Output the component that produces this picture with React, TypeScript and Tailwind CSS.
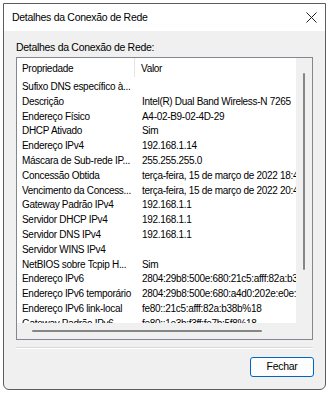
const rows: [string, string][] = [
  ["Sufixo DNS específico à...", ""],
  ["Descrição", "Intel(R) Dual Band Wireless-N 7265"],
  ["Endereço Físico", "A4-02-B9-02-4D-29"],
  ["DHCP Ativado", "Sim"],
  ["Endereço IPv4", "192.168.1.14"],
  ["Máscara de Sub-rede IP...", "255.255.255.0"],
  ["Concessão Obtida", "terça-feira, 15 de março de 2022 18:40:12"],
  ["Vencimento da Concess...", "terça-feira, 15 de março de 2022 20:40:12"],
  ["Gateway Padrão IPv4", "192.168.1.1"],
  ["Servidor DHCP IPv4", "192.168.1.1"],
  ["Servidor DNS IPv4", "192.168.1.1"],
  ["Servidor WINS IPv4", ""],
  ["NetBIOS sobre Tcpip H...", "Sim"],
  ["Endereço IPv6", "2804:29b8:500e:680:21c5:afff:82a:b38b"],
  ["Endereço IPv6 temporário", "2804:29b8:500e:680:a4d0:202e:e0e:1c2"],
  ["Endereço IPv6 link-local", "fe80::21c5:afff:82a:b38b%18"],
  ["Gateway Padrão IPv6", "fe80::1e3b:f3ff:fe7b:5f8%18"],
]

export default function App() {
  return (
    <div
      className="w-[333px] h-[394px] bg-white pt-[3px] pl-[3px] text-[10px] tracking-[-0.3px] text-black"
      style={{ fontFamily: '"Liberation Sans", Arial, sans-serif' }}
    >
      <div className="w-[323px] h-[387px] border border-[#5c5c5c] rounded-b-[6px] flex flex-col overflow-hidden bg-[#f0f0f0]">
        {/* title bar */}
        <div className="h-[27px] bg-white flex items-center justify-between pl-[8px] pr-[6px] shrink-0">
          <span className="text-[10.5px] pt-[1px]">Detalhes da Conexão de Rede</span>
          <svg width="11" height="11" viewBox="0 0 11 11" className="mr-[2px]">
            <path d="M0.5 0.5 L10.5 10.5 M10.5 0.5 L0.5 10.5" stroke="#222" strokeWidth="1" />
          </svg>
        </div>

        <div className="flex-1 flex flex-col px-[12px]">
          <div className="pt-[9px] h-[26px] text-[10.5px]">Detalhes da Conexão de Rede:</div>

          {/* list box */}
          <div className="h-[283px] border border-[#828790] bg-white flex flex-col shrink-0">
            <div className="flex flex-1 min-h-0">
              <div className="flex-1 min-w-0 flex flex-col overflow-hidden">
                <div className="h-[22px] flex shrink-0">
                  <div className="w-[118px] pl-[5px] pt-[3px] border-r border-[#e5e5e5] h-[19px]">Propriedade</div>
                  <div className="pl-[6px] pt-[3px]">Valor</div>
                </div>
                {rows.map(([k, v], i) => (
                  <div key={i} className="flex h-[14.8px] leading-[14.8px] whitespace-nowrap shrink-0">
                    <div className="w-[119px] pl-[5px] pr-[2px] overflow-hidden truncate">{k}</div>
                    <div className="pl-[6px] overflow-hidden flex-1">{v}</div>
                  </div>
                ))}
              </div>
              {/* vertical scrollbar */}
              <div className="w-[16px] bg-[#f0f0f0] flex justify-center pt-[15px]">
                <div className="w-[2px] h-[197px] bg-[#868686] rounded-full" />
              </div>
            </div>
            {/* horizontal scrollbar */}
            <div className="h-[16px] flex shrink-0">
              <div className="flex-1 bg-[#f0f0f0] flex items-center pl-[15px]">
                <div className="h-[2px] w-[230px] bg-[#868686] rounded-full" />
              </div>
              <div className="w-[16px] bg-[#f0f0f0]" />
            </div>
          </div>

          <div className="mt-[7px] h-[2px] border-t border-[#d9d9d9] border-b border-b-white" />

          <div className="flex justify-end mt-[8px]">
            <button className="w-[64px] h-[20px] rounded-[3px] border border-[#0067c0] bg-[#fdfdfd] text-[10.5px] -mr-[1px]">
              Fechar
            </button>
          </div>
        </div>
      </div>
    </div>
  )
}
